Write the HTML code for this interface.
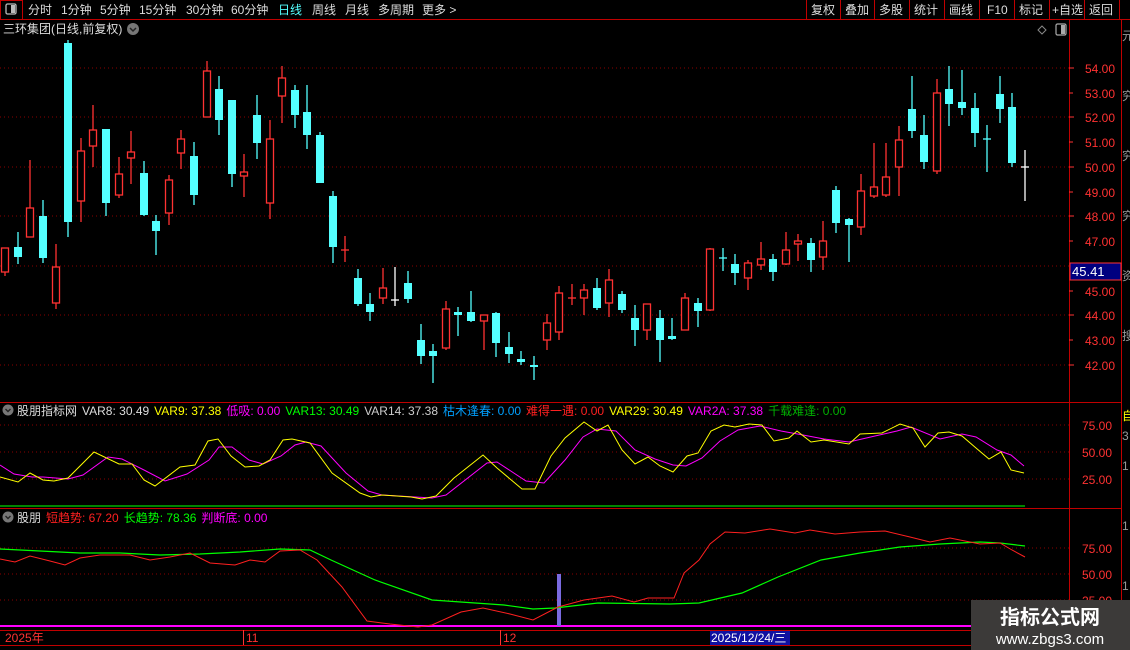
<!DOCTYPE html>
<html><head><meta charset="utf-8"><style>
html,body{margin:0;padding:0;background:#000;width:1130px;height:650px;overflow:hidden}
svg{display:block}
text{font-family:"Liberation Sans","Noto Sans CJK SC",sans-serif;font-size:12px}
.r line{stroke:#ff3232;stroke-width:1.3}
.r rect{fill:#000;stroke:#ff3232;stroke-width:1.3}
.c line{stroke:#54ffff;stroke-width:1.3}
.c rect{fill:#54ffff}
.w line{stroke:#fff;stroke-width:1.3}
.w rect{fill:#fff}
.g{stroke:#8a0000;stroke-width:1;stroke-dasharray:1 3}
</style></head><body>
<svg width="1130" height="650" xmlns="http://www.w3.org/2000/svg">
<rect x="0" y="0" width="1130" height="19" fill="#000"/>
<line x1="0" y1="19.5" x2="1130" y2="19.5" stroke="#c00000"/>
<rect x="0.5" y="0.5" width="22" height="19" fill="none" stroke="#c00000"/>
<rect x="6" y="4" width="10" height="10" rx="1.5" fill="none" stroke="#bbb" stroke-width="1.3"/>
<rect x="11" y="5" width="4" height="8" fill="#bbb"/>
<g fill="#ddd">
<text x="28" y="14">分时</text><text x="61" y="14">1分钟</text><text x="100" y="14">5分钟</text>
<text x="139" y="14">15分钟</text><text x="186" y="14">30分钟</text><text x="231" y="14">60分钟</text>
<text x="278" y="14" fill="#54ffff">日线</text><text x="312" y="14">周线</text><text x="345" y="14">月线</text>
<text x="378" y="14">多周期</text><text x="422" y="14">更多 &gt;</text>
</g>
<g stroke="#c00000">
<line x1="806.5" y1="0" x2="806.5" y2="19"/><line x1="840.5" y1="0" x2="840.5" y2="19"/><line x1="874.5" y1="0" x2="874.5" y2="19"/>
<line x1="909.5" y1="0" x2="909.5" y2="19"/><line x1="944.5" y1="0" x2="944.5" y2="19"/><line x1="979.5" y1="0" x2="979.5" y2="19"/>
<line x1="1014.5" y1="0" x2="1014.5" y2="19"/><line x1="1049.5" y1="0" x2="1049.5" y2="19"/><line x1="1084.5" y1="0" x2="1084.5" y2="19"/>
<line x1="1119.5" y1="0" x2="1119.5" y2="19"/>
</g>
<g fill="#ddd">
<text x="811" y="14">复权</text><text x="845" y="14">叠加</text><text x="879" y="14">多股</text><text x="914" y="14">统计</text>
<text x="949" y="14">画线</text><text x="987" y="14">F10</text><text x="1019" y="14">标记</text><text x="1052" y="14">+自选</text><text x="1089" y="14">返回</text>
</g>
<text x="3" y="33" fill="#ddd">三环集团(日线,前复权)</text>
<circle cx="133" cy="29" r="6" fill="#777"/><path d="M130 28l3 3 3-3" stroke="#222" stroke-width="1.5" fill="none"/>
<path d="M1042 26l4 4-4 4-4-4z" fill="none" stroke="#888"/>
<rect x="1056" y="24" width="10" height="11" rx="1.5" fill="none" stroke="#aaa" stroke-width="1.2"/><rect x="1061" y="25" width="4" height="9" fill="#aaa"/>
<line x1="1069.5" y1="19" x2="1069.5" y2="646" stroke="#c00000"/>
<line x1="1121.5" y1="19" x2="1121.5" y2="646" stroke="#c00000"/>
<line x1="0" y1="402.5" x2="1121" y2="402.5" stroke="#c00000"/>
<line x1="0" y1="508.5" x2="1121" y2="508.5" stroke="#c00000"/>
<line x1="0" y1="630.5" x2="1121" y2="630.5" stroke="#c00000"/>
<line x1="0" y1="645.5" x2="1121" y2="645.5" stroke="#c00000"/>
<g class="g">
<line x1="0" y1="68" x2="1069" y2="68"/><line x1="0" y1="117" x2="1069" y2="117"/><line x1="0" y1="167" x2="1069" y2="167"/>
<line x1="0" y1="216" x2="1069" y2="216"/><line x1="0" y1="266" x2="1069" y2="266"/><line x1="0" y1="315" x2="1069" y2="315"/><line x1="0" y1="365" x2="1069" y2="365"/>
<line x1="0" y1="425" x2="1069" y2="425"/><line x1="0" y1="452" x2="1069" y2="452"/><line x1="0" y1="479" x2="1069" y2="479"/>
<line x1="0" y1="548" x2="1069" y2="548"/><line x1="0" y1="574" x2="1069" y2="574"/><line x1="0" y1="600" x2="1069" y2="600"/>
</g>
<g fill="#ff3232" style="font-size:13px">
<text x="1085" y="73">54.00</text><text x="1085" y="98">53.00</text><text x="1085" y="122">52.00</text><text x="1085" y="147">51.00</text>
<text x="1085" y="172">50.00</text><text x="1085" y="197">49.00</text><text x="1085" y="221">48.00</text><text x="1085" y="246">47.00</text>
<text x="1085" y="296">45.00</text><text x="1085" y="320">44.00</text><text x="1085" y="345">43.00</text><text x="1085" y="370">42.00</text>
<text x="1082" y="430">75.00</text><text x="1082" y="457">50.00</text><text x="1082" y="484">25.00</text>
<text x="1082" y="553">75.00</text><text x="1082" y="579">50.00</text><text x="1082" y="605">25.00</text>
</g>
<g stroke="#ff3232">
<line x1="1069" y1="68" x2="1074" y2="68"/><line x1="1069" y1="93" x2="1073" y2="93"/><line x1="1069" y1="117" x2="1074" y2="117"/><line x1="1069" y1="142" x2="1073" y2="142"/>
<line x1="1069" y1="167" x2="1074" y2="167"/><line x1="1069" y1="192" x2="1073" y2="192"/><line x1="1069" y1="216" x2="1074" y2="216"/><line x1="1069" y1="241" x2="1073" y2="241"/>
<line x1="1069" y1="291" x2="1073" y2="291"/><line x1="1069" y1="315" x2="1074" y2="315"/><line x1="1069" y1="340" x2="1073" y2="340"/><line x1="1069" y1="365" x2="1074" y2="365"/>
</g>
<rect x="1070" y="263" width="51" height="17" fill="#000080" stroke="#ff3232"/>
<text x="1072" y="276" fill="#fff" style="font-size:13px">45.41</text>
<g fill="#999" font-size="12"><text x="1122" y="40">元</text><text x="1122" y="100">究</text><text x="1122" y="160">究</text><text x="1122" y="220">究</text><text x="1122" y="280">资</text><text x="1122" y="340">搜</text><text x="1122" y="420" fill="#ff0">自</text><text x="1122" y="440">3</text><text x="1122" y="470">1</text><text x="1122" y="530">1</text><text x="1122" y="590">1</text></g>
<g class="r"><line x1="5" y1="248" x2="5" y2="276"/><rect x="1.5" y="248" width="7" height="24"/></g>
<g class="c"><line x1="18" y1="232" x2="18" y2="264"/><rect x="14" y="247" width="8" height="10"/></g>
<g class="r"><line x1="30" y1="160" x2="30" y2="237"/><rect x="26.5" y="208" width="7" height="29"/></g>
<g class="c"><line x1="43" y1="200" x2="43" y2="263"/><rect x="39" y="216" width="8" height="42"/></g>
<g class="r"><line x1="56" y1="244" x2="56" y2="309"/><rect x="52.5" y="267" width="7" height="36"/></g>
<g class="c"><line x1="68" y1="40" x2="68" y2="237"/><rect x="64" y="43" width="8" height="179"/></g>
<g class="r"><line x1="81" y1="138" x2="81" y2="222"/><rect x="77.5" y="151" width="7" height="50"/></g>
<g class="r"><line x1="93" y1="105" x2="93" y2="167"/><rect x="89.5" y="130" width="7" height="16"/></g>
<g class="c"><line x1="106" y1="129" x2="106" y2="216"/><rect x="102" y="129" width="8" height="74"/></g>
<g class="r"><line x1="119" y1="157" x2="119" y2="198"/><rect x="115.5" y="174" width="7" height="21"/></g>
<g class="r"><line x1="131" y1="131" x2="131" y2="184"/><rect x="127.5" y="152" width="7" height="6"/></g>
<g class="c"><line x1="144" y1="161" x2="144" y2="216"/><rect x="140" y="173" width="8" height="42"/></g>
<g class="c"><line x1="156" y1="215" x2="156" y2="255"/><rect x="152" y="221" width="8" height="10"/></g>
<g class="r"><line x1="169" y1="175" x2="169" y2="225"/><rect x="165.5" y="180" width="7" height="33"/></g>
<g class="r"><line x1="181" y1="130" x2="181" y2="169"/><rect x="177.5" y="139" width="7" height="14"/></g>
<g class="c"><line x1="194" y1="142" x2="194" y2="205"/><rect x="190" y="156" width="8" height="39"/></g>
<g class="r"><line x1="207" y1="61" x2="207" y2="117"/><rect x="203.5" y="71" width="7" height="46"/></g>
<g class="c"><line x1="219" y1="76" x2="219" y2="135"/><rect x="215" y="89" width="8" height="31"/></g>
<g class="c"><line x1="232" y1="100" x2="232" y2="187"/><rect x="228" y="100" width="8" height="74"/></g>
<g class="r"><line x1="244" y1="154" x2="244" y2="197"/><rect x="240.5" y="172" width="7" height="4"/></g>
<g class="c"><line x1="257" y1="95" x2="257" y2="159"/><rect x="253" y="115" width="8" height="28"/></g>
<g class="r"><line x1="270" y1="120" x2="270" y2="219"/><rect x="266.5" y="139" width="7" height="64"/></g>
<g class="r"><line x1="282" y1="66" x2="282" y2="123"/><rect x="278.5" y="78" width="7" height="18"/></g>
<g class="c"><line x1="295" y1="85" x2="295" y2="128"/><rect x="291" y="90" width="8" height="25"/></g>
<g class="c"><line x1="307" y1="85" x2="307" y2="149"/><rect x="303" y="112" width="8" height="23"/></g>
<g class="c"><line x1="320" y1="132" x2="320" y2="183"/><rect x="316" y="135" width="8" height="48"/></g>
<g class="c"><line x1="333" y1="191" x2="333" y2="263"/><rect x="329" y="196" width="8" height="51"/></g>
<g class="r"><line x1="345" y1="236" x2="345" y2="262"/><line x1="341" y1="250" x2="349" y2="250"/></g>
<g class="c"><line x1="358" y1="269" x2="358" y2="306"/><rect x="354" y="278" width="8" height="26"/></g>
<g class="c"><line x1="370" y1="293" x2="370" y2="321"/><rect x="366" y="304" width="8" height="8"/></g>
<g class="r"><line x1="383" y1="268" x2="383" y2="304"/><rect x="379.5" y="288" width="7" height="10"/></g>
<g class="w"><line x1="395" y1="267" x2="395" y2="306"/><line x1="391" y1="300" x2="399" y2="300"/></g>
<g class="c"><line x1="408" y1="271" x2="408" y2="303"/><rect x="404" y="283" width="8" height="16"/></g>
<g class="c"><line x1="421" y1="324" x2="421" y2="364"/><rect x="417" y="340" width="8" height="16"/></g>
<g class="c"><line x1="433" y1="344" x2="433" y2="383"/><rect x="429" y="351" width="8" height="5"/></g>
<g class="r"><line x1="446" y1="301" x2="446" y2="350"/><rect x="442.5" y="309" width="7" height="39"/></g>
<g class="c"><line x1="458" y1="307" x2="458" y2="336"/><rect x="454" y="312" width="8" height="3"/></g>
<g class="c"><line x1="471" y1="291" x2="471" y2="322"/><rect x="467" y="312" width="8" height="9"/></g>
<g class="r"><line x1="484" y1="315" x2="484" y2="350"/><rect x="480.5" y="315" width="7" height="6"/></g>
<g class="c"><line x1="496" y1="312" x2="496" y2="357"/><rect x="492" y="313" width="8" height="30"/></g>
<g class="c"><line x1="509" y1="332" x2="509" y2="363"/><rect x="505" y="347" width="8" height="7"/></g>
<g class="c"><line x1="521" y1="351" x2="521" y2="365"/><rect x="517" y="359" width="8" height="3"/></g>
<g class="c"><line x1="534" y1="356" x2="534" y2="380"/><rect x="530" y="365" width="8" height="2"/></g>
<g class="r"><line x1="547" y1="314" x2="547" y2="350"/><rect x="543.5" y="323" width="7" height="17"/></g>
<g class="r"><line x1="559" y1="286" x2="559" y2="340"/><rect x="555.5" y="293" width="7" height="39"/></g>
<g class="r"><line x1="572" y1="284" x2="572" y2="305"/><line x1="568" y1="298" x2="576" y2="298"/></g>
<g class="r"><line x1="584" y1="284" x2="584" y2="315"/><rect x="580.5" y="290" width="7" height="8"/></g>
<g class="c"><line x1="597" y1="278" x2="597" y2="310"/><rect x="593" y="288" width="8" height="20"/></g>
<g class="r"><line x1="609" y1="269" x2="609" y2="317"/><rect x="605.5" y="280" width="7" height="23"/></g>
<g class="c"><line x1="622" y1="291" x2="622" y2="313"/><rect x="618" y="294" width="8" height="16"/></g>
<g class="c"><line x1="635" y1="305" x2="635" y2="346"/><rect x="631" y="318" width="8" height="12"/></g>
<g class="r"><line x1="647" y1="304" x2="647" y2="340"/><rect x="643.5" y="304" width="7" height="26"/></g>
<g class="c"><line x1="660" y1="310" x2="660" y2="362"/><rect x="656" y="318" width="8" height="22"/></g>
<g class="c"><line x1="672" y1="318" x2="672" y2="340"/><rect x="668" y="336" width="8" height="3"/></g>
<g class="r"><line x1="685" y1="293" x2="685" y2="330"/><rect x="681.5" y="298" width="7" height="32"/></g>
<g class="c"><line x1="698" y1="298" x2="698" y2="327"/><rect x="694" y="303" width="8" height="8"/></g>
<g class="r"><line x1="710" y1="248" x2="710" y2="311"/><rect x="706.5" y="249" width="7" height="61"/></g>
<g class="c"><line x1="723" y1="248" x2="723" y2="271"/><line x1="719" y1="258" x2="727" y2="258"/></g>
<g class="c"><line x1="735" y1="254" x2="735" y2="285"/><rect x="731" y="264" width="8" height="9"/></g>
<g class="r"><line x1="748" y1="260" x2="748" y2="290"/><rect x="744.5" y="263" width="7" height="15"/></g>
<g class="r"><line x1="761" y1="242" x2="761" y2="270"/><rect x="757.5" y="259" width="7" height="6"/></g>
<g class="c"><line x1="773" y1="254" x2="773" y2="281"/><rect x="769" y="259" width="8" height="13"/></g>
<g class="r"><line x1="786" y1="232" x2="786" y2="265"/><rect x="782.5" y="250" width="7" height="14"/></g>
<g class="r"><line x1="798" y1="234" x2="798" y2="261"/><rect x="794.5" y="241" width="7" height="3"/></g>
<g class="c"><line x1="811" y1="238" x2="811" y2="272"/><rect x="807" y="243" width="8" height="17"/></g>
<g class="r"><line x1="823" y1="221" x2="823" y2="270"/><rect x="819.5" y="241" width="7" height="16"/></g>
<g class="c"><line x1="836" y1="186" x2="836" y2="233"/><rect x="832" y="190" width="8" height="33"/></g>
<g class="c"><line x1="849" y1="218" x2="849" y2="262"/><rect x="845" y="219" width="8" height="6"/></g>
<g class="r"><line x1="861" y1="174" x2="861" y2="235"/><rect x="857.5" y="191" width="7" height="36"/></g>
<g class="r"><line x1="874" y1="143" x2="874" y2="198"/><rect x="870.5" y="187" width="7" height="9"/></g>
<g class="r"><line x1="886" y1="143" x2="886" y2="197"/><rect x="882.5" y="177" width="7" height="18"/></g>
<g class="r"><line x1="899" y1="126" x2="899" y2="196"/><rect x="895.5" y="140" width="7" height="27"/></g>
<g class="c"><line x1="912" y1="76" x2="912" y2="138"/><rect x="908" y="109" width="8" height="22"/></g>
<g class="c"><line x1="924" y1="115" x2="924" y2="169"/><rect x="920" y="135" width="8" height="27"/></g>
<g class="r"><line x1="937" y1="79" x2="937" y2="174"/><rect x="933.5" y="93" width="7" height="78"/></g>
<g class="c"><line x1="949" y1="66" x2="949" y2="126"/><rect x="945" y="89" width="8" height="15"/></g>
<g class="c"><line x1="962" y1="70" x2="962" y2="115"/><rect x="958" y="102" width="8" height="6"/></g>
<g class="c"><line x1="975" y1="93" x2="975" y2="147"/><rect x="971" y="108" width="8" height="25"/></g>
<g class="c"><line x1="987" y1="125" x2="987" y2="172"/><line x1="983" y1="139" x2="991" y2="139"/></g>
<g class="c"><line x1="1000" y1="76" x2="1000" y2="123"/><rect x="996" y="94" width="8" height="15"/></g>
<g class="c"><line x1="1012" y1="93" x2="1012" y2="167"/><rect x="1008" y="107" width="8" height="56"/></g>
<g class="w"><line x1="1025" y1="150" x2="1025" y2="201"/><line x1="1021" y1="167" x2="1029" y2="167"/></g>
<circle cx="8" cy="410" r="5.5" fill="#777"/><path d="M5.5 409l2.5 2.5 2.5-2.5" stroke="#222" stroke-width="1.4" fill="none"/>
<text x="17" y="415"><tspan fill="#ddd">股朋指标网</tspan><tspan fill="#ddd" dx="5">VAR8: 30.49</tspan><tspan fill="#ffff00" dx="5">VAR9: 37.38</tspan><tspan fill="#ff00ff" dx="5">低吸: 0.00</tspan><tspan fill="#00ff00" dx="5">VAR13: 30.49</tspan><tspan fill="#ccc" dx="5">VAR14: 37.38</tspan><tspan fill="#00a0ff" dx="5">枯木逢春: 0.00</tspan><tspan fill="#ff2020" dx="5">难得一遇: 0.00</tspan><tspan fill="#ffff00" dx="5">VAR29: 30.49</tspan><tspan fill="#ff00ff" dx="5">VAR2A: 37.38</tspan><tspan fill="#00b000" dx="5">千载难逢: 0.00</tspan></text>
<line x1="0" y1="506" x2="1025" y2="506" stroke="#00b000" stroke-width="1.5"/>
<polyline fill="none" stroke="#ff00ff" stroke-width="1" points="0,465 14,474 32,477 43,477 68,479 83,475 108,457 122,459 144,470 165,481 187,474 209,460 219,447 232,447 249,460 263,464 281,456 295,445 306,442 321,446 346,473 368,491 382,495 432,498 446,495 487,463 497,462 526,481 544,483 565,460 583,437 597,429 616,431 635,450 655,459 673,465 686,466 702,458 720,441 738,430 760,426 781,431 803,435 824,439 849,442 875,436 897,431 911,427 940,439 962,434 976,437 997,450 1011,455 1024,466"/>
<polyline fill="none" stroke="#ffff00" stroke-width="1" points="0,477 18,482 30,473 43,480 54,481 68,478 94,452 119,464 132,464 144,480 155,486 180,467 195,465 208,441 218,439 231,456 245,467 259,466 270,460 283,440 292,439 310,443 332,473 360,493 371,497 382,495 411,497 422,499 436,496 454,478 483,455 497,468 522,489 535,489 551,456 565,438 584,422 597,431 608,425 622,450 635,464 648,457 660,466 673,472 687,456 698,453 711,431 724,425 735,427 749,424 762,425 774,441 789,438 797,431 811,442 824,440 849,444 860,434 882,433 900,424 913,428 925,447 938,433 949,432 962,436 976,448 989,459 1001,452 1011,470 1024,473"/>
<circle cx="8" cy="517" r="5.5" fill="#777"/><path d="M5.5 516l2.5 2.5 2.5-2.5" stroke="#222" stroke-width="1.4" fill="none"/>
<text x="17" y="522"><tspan fill="#ddd">股朋</tspan><tspan fill="#ff2020" dx="5">短趋势: 67.20</tspan><tspan fill="#00ff00" dx="5">长趋势: 78.36</tspan><tspan fill="#ff00ff" dx="5">判断底: 0.00</tspan></text>
<line x1="0" y1="626" x2="1069" y2="626" stroke="#ff00ff" stroke-width="2"/>
<rect x="557" y="574" width="4" height="52" fill="#7a6ae0"/>
<polyline fill="none" stroke="#00ff00" stroke-width="1.2" points="0,549 40,551 80,553 120,553 160,555 200,554 240,552 280,549 310,550 331,560 375,580 432,600 504,605 533,609 555,608 598,603 670,604 699,603 742,593 778,577 821,560 860,553 900,547 940,544 980,542 1000,543 1025,546"/>
<polyline fill="none" stroke="#ff2020" stroke-width="1" points="0,559 15,562 30,556 50,561 65,565 80,558 100,555 130,555 150,560 170,557 190,553 210,563 235,565 250,560 265,562 280,551 300,550 317,560 342,587 367,621 390,624 418,627 432,625 461,612 483,608 510,614 533,620 558,607 584,600 612,596 634,602 648,598 674,598 684,573 699,560 710,544 725,532 745,533 770,529 795,533 810,530 835,534 860,532 885,531 910,537 930,542 950,538 980,544 1000,543 1012,550 1025,557"/>
<g fill="#ff3232" font-size="11"><text x="5" y="642">2025年</text><text x="246" y="642">11</text><text x="503" y="642">12</text></g>
<g stroke="#ff3232"><line x1="243.5" y1="630" x2="243.5" y2="645"/><line x1="500.5" y1="630" x2="500.5" y2="645"/></g>
<rect x="710" y="631" width="80" height="14" fill="#1010a0"/>
<text x="711" y="642" fill="#fff" font-size="11">2025/12/24/三</text>
<rect x="971" y="600" width="159" height="50" fill="#3c3a39"/>
<text x="1050" y="624" fill="#fff" style="font-size:20px;font-weight:bold" text-anchor="middle">指标公式网</text>
<text x="1050" y="644" fill="#fff" style="font-size:15px" text-anchor="middle">www.zbgs3.com</text>
</svg>
</body></html>
